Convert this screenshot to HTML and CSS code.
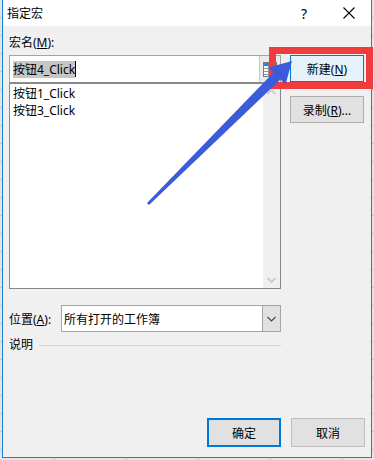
FILE: index.html
```html
<!DOCTYPE html>
<html lang="zh-CN">

<head>
  <meta charset="UTF-8">
  <title>指定宏</title>
  <link rel="stylesheet" href="styles.css">
</head>

<body>
  <div class="dialog">
    <div class="titlebar">
      <span class="title">指定宏</span>
      <span class="help">?</span>
      <svg class="close" width="12" height="12" viewBox="0 0 12 12">
        <path d="M0.5 0.5 L11.5 11.5 M11.5 0.5 L0.5 11.5" stroke="#000" stroke-width="1.1" fill="none" />
      </svg>
    </div>

    <div class="main">
      <div class="top">
        <div class="left-col">
          <div class="field-label">宏名(<u>M</u>):</div>
          <div class="name-input">
            <span class="input-text"><span class="selected">按钮4_Click</span><span class="caret"></span></span>
            <span class="range-btn">
              <svg width="14" height="15" viewBox="0 0 14 15">
                <rect x="0.5" y="0.5" width="13" height="14" fill="#fff" stroke="#6d7c8f" />
                <rect x="1" y="1" width="12" height="3" fill="#4a78c2" />
                <path d="M1 6.5 H13 M1 9.5 H13 M1 12.5 H13 M5.5 4 V14 M9.5 4 V14" stroke="#8a97a8" stroke-width="1" />
                <rect x="10" y="7" width="3" height="5" fill="#e04848" />
              </svg>
            </span>
          </div>
          <div class="macro-list">
            <ul class="items">
              <li>按钮1_Click</li>
              <li>按钮3_Click</li>
            </ul>
            <div class="scrollbar">
              <svg width="9" height="6" viewBox="0 0 9 6"><path d="M0.5 5 L4.5 1 L8.5 5" stroke="#c2c2c2" stroke-width="1.4" fill="none" /></svg>
              <svg width="9" height="6" viewBox="0 0 9 6"><path d="M0.5 1 L4.5 5 L8.5 1" stroke="#c2c2c2" stroke-width="1.4" fill="none" /></svg>
            </div>
          </div>
          <div class="location">
            <span class="loc-label">位置(<u>A</u>):</span>
            <div class="combo">
              <span class="combo-text">所有打开的工作簿</span>
              <span class="combo-btn">
                <svg width="9" height="6" viewBox="0 0 9 6"><path d="M0.5 1 L4.5 5 L8.5 1" stroke="#444" stroke-width="1.1" fill="none" /></svg>
              </span>
            </div>
          </div>
          <div class="desc">
            <span>说明</span>
            <span class="desc-line"></span>
          </div>
        </div>

        <div class="right-col">
          <button class="btn btn-hot">新建(<u>N</u>)</button>
          <button class="btn">录制(<u>R</u>)...</button>
        </div>
      </div>

      <div class="footer">
        <button class="btn btn-default">确定</button>
        <button class="btn btn-disabled">取消</button>
      </div>
    </div>
  </div>

  <!-- annotation drawn over the screenshot -->
  <div class="red-box"></div>
  <svg class="arrow" width="374" height="460" viewBox="0 0 374 460">
    <polygon points="147,203 273.5,72.5 268.5,67.5 292,61 285.5,84.5 280.5,79.5 149,205" fill="#3b5bd8" />
  </svg>
</body>

</html>
```

FILE: styles.css
```css
body {
  margin: 0;
  width: 374px;
  height: 460px;
  overflow: hidden;
  position: relative;
  font-family: 'Noto Sans', 'Noto Sans CJK SC', sans-serif;
  font-size: 12px;
  color: #000;
  background-color: #e4e4e4;
  background-image:
    repeating-linear-gradient(to bottom, transparent 0, transparent 17px, #c6c6c6 17px, #c6c6c6 18px),
    repeating-linear-gradient(to right, transparent 0, transparent 54px, #c6c6c6 54px, #c6c6c6 55px, transparent 55px, transparent 72px);
}

.dialog {
  box-sizing: border-box;
  margin-left: 2px;
  width: 370px;
  height: 458px;
  border: 1px solid #1883d7;
  border-top: 0;
  background: #f0f0f0;
  display: flex;
  flex-direction: column;
}

.titlebar {
  height: 26px;
  background: #fff;
  display: flex;
  align-items: center;
  padding-left: 4px;
}

.title {
  flex: 1;
  font-size: 12px;
}

.help {
  font-size: 14px;
  margin-right: 36px;
}

.close {
  margin-right: 16px;
}

.main {
  flex: 1;
  display: flex;
  flex-direction: column;
  padding: 0 6px 10px 6px;
}

.top {
  display: flex;
  gap: 9px;
}

.left-col {
  width: 272px;
  display: flex;
  flex-direction: column;
}

.field-label {
  margin-top: 9px;
  line-height: 16px;
  margin-bottom: 4px;
}

.name-input {
  box-sizing: border-box;
  height: 28px;
  background: #fff;
  border: 1px solid #a5a5a5;
  border-bottom-color: #8c8c8c;
  display: flex;
  align-items: center;
}

.input-text {
  flex: 1;
  padding-left: 3px;
  display: flex;
  align-items: center;
}

.selected {
  background: #c6c6c6;
  line-height: 17px;
}

.caret {
  width: 1px;
  height: 16px;
  background: #000;
}

.range-btn {
  width: 20px;
  height: 26px;
  background: #ebebeb;
  border-left: 1px solid #c8c8c8;
  display: flex;
  align-items: center;
  justify-content: center;
}

.macro-list {
  box-sizing: border-box;
  height: 206px;
  background: #fff;
  border: 1px solid #828790;
  display: flex;
}

.items {
  flex: 1;
  list-style: none;
  margin: 0;
  padding: 1px 3px;
}

.items li {
  line-height: 17px;
}

.scrollbar {
  width: 17px;
  background: #f0f0f0;
  display: flex;
  flex-direction: column;
  justify-content: space-between;
  align-items: center;
  padding: 5px 0;
}

.location {
  margin-top: 16px;
  display: flex;
  align-items: center;
}

.loc-label {
  width: 52px;
}

.combo {
  box-sizing: border-box;
  flex: 1;
  height: 27px;
  background: #fff;
  border: 1px solid #a5a5a5;
  display: flex;
  align-items: center;
}

.combo-text {
  flex: 1;
  padding-left: 2px;
}

.combo-btn {
  width: 17px;
  height: 25px;
  background: #e1e1e1;
  border-left: 1px solid #a5a5a5;
  display: flex;
  align-items: center;
  justify-content: center;
}

.desc {
  margin-top: 6px;
  display: flex;
  align-items: center;
  line-height: 14px;
}

.desc-line {
  flex: 1;
  height: 1px;
  background: #d5d5d5;
  margin-left: 6px;
}

.right-col {
  width: 74px;
  display: flex;
  flex-direction: column;
}

.btn {
  box-sizing: border-box;
  width: 74px;
  height: 27px;
  padding: 0;
  background: #e1e1e1;
  border: 1px solid #adadad;
  font-family: 'Noto Sans', 'Noto Sans CJK SC', sans-serif;
  font-size: 12px;
  color: #000;
}

.right-col .btn:first-child {
  margin-top: 29px;
}

.right-col .btn + .btn {
  margin-top: 14px;
}

.btn-hot {
  background: #e5f1fb;
  border-color: #0078d7;
}

.footer {
  margin-top: auto;
  display: flex;
  justify-content: flex-end;
  gap: 10px;
}

.footer .btn {
  height: 29px;
}

.btn-default {
  border: 2px solid #0078d7;
}

.btn-disabled {
  border-color: #bfbfbf;
}

.red-box {
  position: absolute;
  left: 269px;
  top: 47px;
  width: 104px;
  height: 42px;
  box-sizing: border-box;
  border: 7px solid #f03c3c;
}

.arrow {
  position: absolute;
  left: 0;
  top: 0;
}
```
